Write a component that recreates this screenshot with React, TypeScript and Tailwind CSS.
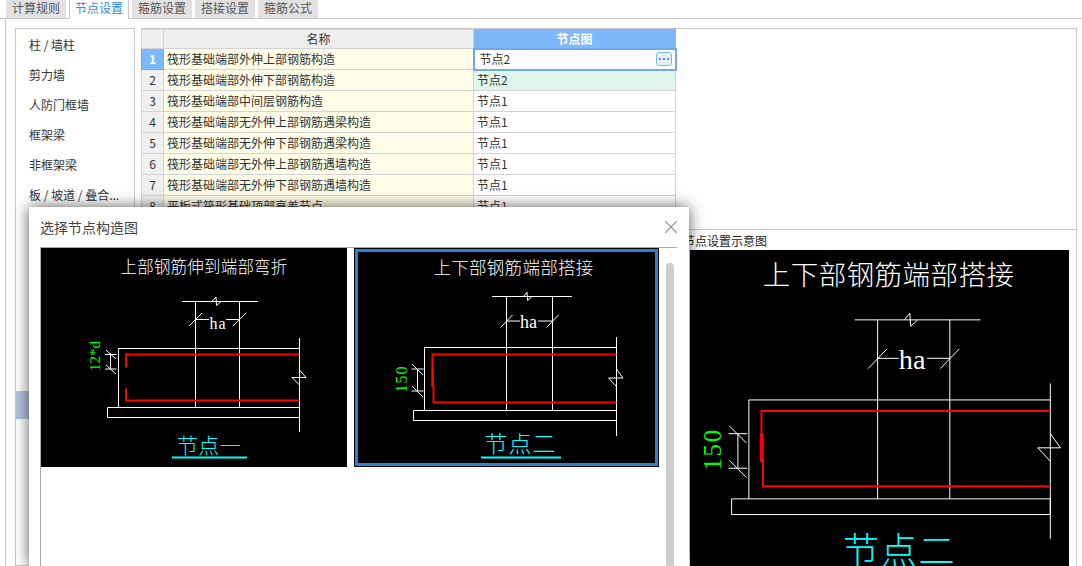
import { X } from "lucide-react";

const tabs = ["计算规则", "节点设置", "箍筋设置", "搭接设置", "箍筋公式"];
const categories = ["柱 / 墙柱", "剪力墙", "人防门框墙", "框架梁", "非框架梁", "板 / 坡道 / 叠合..."];
const rows = [
  ["筏形基础端部外伸上部钢筋构造", "节点2"],
  ["筏形基础端部外伸下部钢筋构造", "节点2"],
  ["筏形基础端部中间层钢筋构造", "节点1"],
  ["筏形基础端部无外伸上部钢筋遇梁构造", "节点1"],
  ["筏形基础端部无外伸下部钢筋遇梁构造", "节点1"],
  ["筏形基础端部无外伸上部钢筋遇墙构造", "节点1"],
  ["筏形基础端部无外伸下部钢筋遇墙构造", "节点1"],
  ["平板式筏形基础顶部高差节点", "节点1"],
];

const cjk = "'Noto Sans CJK SC', 'Liberation Sans', sans-serif";
const serif = "'Liberation Serif', 'Noto Sans CJK SC', serif";

// white linework shared by both drawings
function L({ d, color = "#fff", w = 1 }: { d: string; color?: string; w?: number }) {
  return <path d={d} fill="none" stroke={color} strokeWidth={w} vectorEffect="non-scaling-stroke" />;
}

// 节点一, coordinates are relative to the card
function NodeOne() {
  return (
    <svg viewBox="0 0 306 219" className="block w-full h-full bg-black">
      <text x="163" y="25" textAnchor="middle" fill="#fff" fontSize="16.5" letterSpacing="0.2" style={{ fontFamily: cjk, fontWeight: 300 }}>
        上部钢筋伸到端部弯折
      </text>
      <L d="M141 53.5H217M154.5 53.5V159.5M198.5 53.5V159.5" />
      <L d="M171 53.5L175 49L175.5 57.5L180 53.5" />
      <L d="M154.5 71.5H168M185 71.5H198.5M148 78L161 65M192 78L205 65" />
      <text x="177" y="81" textAnchor="middle" fill="#fff" fontSize="16" letterSpacing="1" style={{ fontFamily: serif }}>
        ha
      </text>
      <L d="M258.5 90V184M77.5 100.5H258.5M77.5 100.5V159.5M66.5 159.5H258.5V169.5H66.5V159.5" />
      <L d="M258.5 122L265 129.5H251L258.5 137" />
      <L d="M85 119.5V106.5H258.5M85 140.5V152.5H258.5" color="#ff0000" w={2} />
      <L d="M69.5 105V121M64 106.5H75.5M64 121H75.5M65 102L75 111M65 117L75 126" />
      <text transform="translate(59 108) rotate(-90)" textAnchor="middle" fill="#00ff00" fontSize="15" style={{ fontFamily: serif }}>
        12*d
      </text>
      <text x="168" y="205" textAnchor="middle" fill="#00ffff" fontSize="21" letterSpacing="0.4" style={{ fontFamily: cjk, fontWeight: 300 }}>
        节点一
      </text>
      <L d="M131 209.5H206" color="#00ffff" w={2} />
    </svg>
  );
}

// 节点二, also drawn larger in the preview pane through the viewBox
function NodeTwo({ viewBox, className }: { viewBox: string; className: string }) {
  return (
    <svg viewBox={viewBox} preserveAspectRatio="xMidYMin slice" className={className}>
      <text x="159.5" y="26" textAnchor="middle" fill="#fff" fontSize="17.5" letterSpacing="0.3" style={{ fontFamily: cjk, fontWeight: 300 }}>
        上下部钢筋端部搭接
      </text>
      <L d="M138 48.5H218M152.5 48.5V162.5M198.5 48.5V162.5" />
      <L d="M169.5 48.5L173 44.3L173.6 52.6L178 48.5" />
      <L d="M152.5 73H166M184 73H198.5M146.5 79.5L158.5 67M192.5 79.5L204.5 67" />
      <text x="174.5" y="80" textAnchor="middle" fill="#fff" fontSize="18" style={{ fontFamily: serif }}>
        ha
      </text>
      <L d="M262.5 89V188M70.5 99.5H262.5M70.5 99.5V162.5M59.5 162.5H262.5V172.5H59.5V162.5" />
      <L d="M262.5 121L269 130H254.5L262.5 138.5" />
      <L d="M262.5 106.5H78.5V138H79.5V154.5H262.5" color="#ff0000" w={2} />
      <path d="M77.5 121H80V139H77.5Z" fill="#ff0000" />
      <L d="M63.5 121V143M57.5 121H69.5M57.5 143H69.5M58 116L69 127M58 138L69 149" />
      <text transform="translate(53 131) rotate(-90)" textAnchor="middle" fill="#00ff00" fontSize="16" letterSpacing="1" style={{ fontFamily: serif }}>
        150
      </text>
      <text x="166.5" y="204" textAnchor="middle" fill="#00ffff" fontSize="23" letterSpacing="1" style={{ fontFamily: cjk, fontWeight: 300 }}>
        节点二
      </text>
      <L d="M127 209.5H207" color="#00ffff" w={2} />
    </svg>
  );
}

function NodeTable() {
  return (
    <table className="table-fixed border-collapse w-[534px] text-xs text-[#333]">
      <colgroup>
        <col className="w-[22px]" />
        <col className="w-[310px]" />
        <col className="w-[202px]" />
      </colgroup>
      <thead>
        <tr className="h-[19px]">
          <th className="bg-[#eeeeee] border border-[#d4d4d4] font-normal"></th>
          <th className="bg-[#eeeeee] border border-[#d4d4d4] font-normal">名称</th>
          <th className="bg-[#7fb8f8] border border-[#7fb8f8] text-white font-bold">节点图</th>
        </tr>
      </thead>
      <tbody>
        {rows.map((row, i) => (
          <tr key={i} className="h-[21px]">
            <td className={i === 0 ? "bg-[#7fb8f8] border border-[#6ea9ec] text-white font-bold text-center" : "bg-[#f0f0f0] border border-[#d4d4d4] text-center"}>
              {i + 1}
            </td>
            <td className="bg-[#fffde8] border border-[#d4d4d4] pl-[3px] whitespace-nowrap overflow-hidden">{row[0]}</td>
            {i === 0 ? (
              <td className="border-2 border-[#6ea9ec] bg-white pl-[5px]">
                <div className="flex items-center justify-between pr-[3px]">
                  <span>{row[1]}</span>
                  <span className="w-[16px] h-[14px] rounded-[3px] border border-[#7fb8f8] bg-[#eaf3fd] flex items-center justify-center gap-[2px]">
                    <i className="w-[2px] h-[2px] bg-[#4a90e2]" />
                    <i className="w-[2px] h-[2px] bg-[#4a90e2]" />
                    <i className="w-[2px] h-[2px] bg-[#4a90e2]" />
                  </span>
                </div>
              </td>
            ) : (
              <td className={`border border-[#d4d4d4] pl-[3px] ${i === 1 ? "bg-[#ddf5ea]" : "bg-white"}`}>{row[1]}</td>
            )}
          </tr>
        ))}
      </tbody>
    </table>
  );
}

export default function App() {
  return (
    <div className="relative w-[1082px] h-[566px] overflow-hidden bg-white text-xs text-[#333]" style={{ fontFamily: cjk }}>
      {/* tabs */}
      <div className="flex h-[19px] pl-[6px] gap-[3px] border-b border-[#c8c6cc]">
        {tabs.map((t, i) => (
          <div
            key={t}
            className={
              i === 1
                ? "w-[60px] h-[19px] pb-[3px] flex items-center justify-center bg-white border-x border-[#c8c6cc] text-[#2f8ae6]"
                : "w-[60px] h-[18px] pb-[3px] flex items-center justify-center bg-[#e2e2e2] text-[#555]"
            }
          >
            {t}
          </div>
        ))}
      </div>

      <div className="flex h-[547px] ml-[5px] mr-[5px] pt-[9px] pl-[9px] gap-[6px] border-l border-[#c8c8c8]">
        {/* category list */}
        <div className="w-[120px] h-[538px] border border-[#c8c8c8] pl-[13px] pt-[1px] shrink-0">
          {categories.map((c) => (
            <div key={c} className="h-[30px] flex items-center whitespace-nowrap">
              {c}
            </div>
          ))}
          <div className="h-[28px] mt-[181px] -ml-[13px] bg-[#b0c4de]" />
        </div>

        {/* right side */}
        <div className="flex-1 flex flex-col border-t border-r border-[#c8c8c8]">
          <div className="h-[200px] overflow-hidden">
            <NodeTable />
          </div>
          <div className="flex-1 border-t border-[#c8c8c8] pl-[549px] pr-[7px] flex flex-col">
            <div className="h-[20px] flex items-end whitespace-nowrap -ml-[7px] text-[#222] leading-[18px]">节点设置示意图</div>
            <NodeTwo viewBox="33 4 241.4 201.3" className="block w-full h-[316px] bg-black" />
          </div>
        </div>
      </div>

      {/* dialog */}
      <div className="absolute left-[29px] top-[207px] w-[660px] h-[359px] bg-white flex flex-col shadow-[0_0_14px_rgba(0,0,0,0.65)]">
        <div className="h-[40px] flex items-center justify-between pl-[11px] pr-[7px] text-sm text-[#444]">
          <span>选择节点构造图</span>
          <X size={22} strokeWidth={1.2} className="text-[#999]" />
        </div>
        <div className="flex-1 ml-[11px] mr-[12px] border-t border-l border-[#aaaaaa] flex min-h-0">
          <div className="flex gap-[7px] items-start w-[625px] shrink-0">
            <div className="w-[306px] h-[219px]">
              <NodeOne />
            </div>
            <div className="w-[305px] h-[219px] bg-black outline-[3px] outline-[#2f7fd6] -outline-offset-4">
              <NodeTwo viewBox="0 0 305 219" className="block w-full h-full" />
            </div>
          </div>
          <div className="w-[8px] mt-[15px] rounded-t-[4px] bg-[#cdcdcd]" />
        </div>
      </div>
    </div>
  );
}
